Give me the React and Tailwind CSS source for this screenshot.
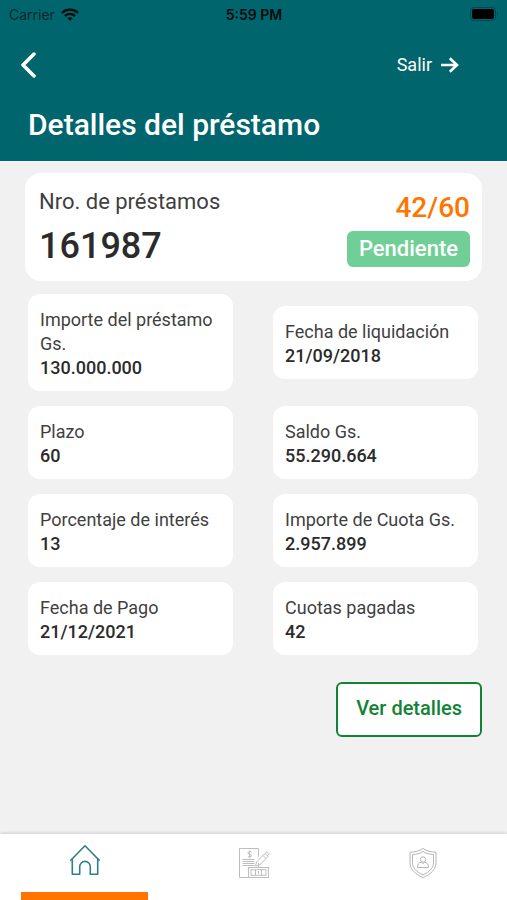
const details = [
  { label: "Importe del préstamo Gs.", value: "130.000.000" },
  { label: "Fecha de liquidación", value: "21/09/2018" },
  { label: "Plazo", value: "60" },
  { label: "Saldo Gs.", value: "55.290.664" },
  { label: "Porcentaje de interés", value: "13" },
  { label: "Importe de Cuota Gs.", value: "2.957.899" },
  { label: "Fecha de Pago", value: "21/12/2021" },
  { label: "Cuotas pagadas", value: "42" },
];

function StatusBar() {
  return (
    <div className="grid h-7 grid-cols-3 items-center pr-2 pl-[9px] font-['Inter','Liberation_Sans',sans-serif] text-[14px] text-[#06282b]">
      <div className="flex items-center gap-[6px]">
        <span>Carrier</span>
        <svg viewBox="0 0 18 13" className="h-[13px] w-[18px]" fill="none" stroke="#000c0e" strokeWidth="2.4">
          <path d="M1 4.8C5.5.6 12.5.6 17 4.8" />
          <path d="M4 8c3-2.7 7-2.7 10 0" />
          <path d="M6.400 10.200c1.600-1.300 3.600-1.300 5.200 0L9 12.800z" fill="#000c0e" stroke="none" />
        </svg>
      </div>
      <span className="text-center font-semibold text-[#000c0e]">5:59 PM</span>
      <svg viewBox="0 0 29 14" className="h-[14px] w-[29px] justify-self-end" fill="none">
        <rect x="0.5" y="0.5" width="25" height="13" rx="3.5" stroke="#04494f" />
        <rect x="2" y="2" width="22" height="10" rx="2" fill="#000" />
        <path d="M27 5c1.5.5 1.5 3.5 0 4z" fill="#04494f" />
      </svg>
    </div>
  );
}

function DetailCard({ label, value }) {
  return (
    <div className="rounded-xl bg-white px-3 pt-[14px] pb-[11px] text-[18px] leading-6">
      <dt className="text-[#3f3f3f]">{label}</dt>
      <dd className="font-medium text-[#2b2b2b]">{value}</dd>
    </div>
  );
}

function HomeIcon() {
  return (
    <svg viewBox="0 0 32 32" className="size-8" fill="none" stroke="#2f7f84" strokeWidth="1.6" strokeLinejoin="round" strokeLinecap="round">
      <path d="M1.800 16.300 16 1.800l14.200 14.500" />
      <path d="M3.300 15v15.200h7.400v-7.500a5.300 5.300 0 0 1 10.600 0v7.500h7.400V15" />
    </svg>
  );
}

function LoanIcon() {
  return (
    <svg viewBox="0 0 32 32" className="size-8" fill="none" stroke="#bdbdbd" strokeWidth="1">
      <path d="M10.500 30.500H1.500V1.500h19v8M20.500 16v4" />
      <path d="M13.500 5.200c-.8-1-3.500-1-3.500.7 0 2 3.500 1 3.500 2.800 0 1.500-2.700 1.700-3.700.6M11.700 3.500v7.500" />
      <path d="M4.500 12.500h12M4.500 14.500h12M4.500 16.500h12M4.500 18.500h12" />
      <path d="m17.500 19 1-4 8.500-8.500 3 3-8.500 8.500zM25 8.500l3 3M27 6.500l2-1.800 2 2-1.500 2" />
      <rect x="10.500" y="20.500" width="20" height="10" />
      <rect x="13" y="22.700" width="15" height="5.600" />
      <path d="M17.500 22.700v5.600M23.500 22.700v5.600M20.500 24v3" />
    </svg>
  );
}

function ShieldIcon() {
  return (
    <svg viewBox="0 0 32 32" className="size-8" fill="none" stroke="#b5b5b5" strokeWidth="1">
      <path d="M16 1.500c4 2.500 8 3.700 13 3.700v10.300c0 7-5.500 12-13 15-7.500-3-13-8-13-15V5.200c5 0 9-1.200 13-3.700z" />
      <path d="M16 4.500c3.200 1.900 6.500 2.900 10.500 3.100v8c0 5.500-4.500 9.700-10.500 12.200C10 25.300 5.500 21.100 5.500 15.600v-8c4-.2 7.300-1.200 10.500-3.100z" />
      <circle cx="16" cy="12.500" r="2.700" />
      <path d="M14.500 15.200c-2.500.5-4 1.800-4 5.300h11c0-3.500-1.500-4.800-4-5.300l-1.500 1.500z" />
    </svg>
  );
}

export default function App() {
  return (
    <div className="flex min-h-screen flex-col bg-[#f1f1f1] font-['Roboto',sans-serif]">
      <header className="bg-[#00656c] pb-4 text-white">
        <StatusBar />
        <div className="flex h-[73px] items-center justify-between pr-12 pl-5">
          <button type="button" aria-label="Volver" className="block">
            <svg viewBox="0 0 17 26" className="h-[26px] w-[17px]" fill="none" stroke="currentColor" strokeWidth="3.5" strokeLinecap="round" strokeLinejoin="round">
              <path d="M14 2 3 13l11 11" />
            </svg>
          </button>
          <button type="button" className="flex items-center gap-[9px] text-[18px] leading-6">
            Salir
            <svg viewBox="0 0 18 16" className="h-4 w-[18px]" fill="none" stroke="currentColor" strokeWidth="2.6">
              <path d="M0 8h16M8.800 1.200 16 8l-7.200 6.800" />
            </svg>
          </button>
        </div>
        <h1 className="px-7 pt-1 text-[30px] leading-10 font-medium">Detalles del préstamo</h1>
      </header>

      <main className="flex-1 px-[25px] pt-3">
        <section className="flex items-start justify-between rounded-2xl bg-white pt-[13px] pr-3 pb-[11px] pl-[14px]">
          <div className="text-[#2b2b2b]">
            <p className="text-[22px] leading-8 text-[#3f3f3f]">Nro. de préstamos</p>
            <p className="pt-2 pb-1 text-[36px] leading-10 font-medium">161987</p>
          </div>
          <div className="flex flex-col items-end pt-1">
            <p className="text-[28px] leading-9 font-medium text-[#ff7500]">42/60</p>
            <span className="mt-[5px] rounded-md bg-[#6fcf97] px-3 text-[22px] leading-9 font-medium text-white">Pendiente</span>
          </div>
        </section>

        <dl className="mt-[13px] grid grid-cols-2 items-center gap-x-10 gap-y-[15px] pr-1 pl-[3px]">
          {details.map((item) => (
            <DetailCard key={item.label} label={item.label} value={item.value} />
          ))}
        </dl>

        <div className="mt-[27px] flex justify-end">
          <button type="button" className="rounded-md border-2 border-[#128334] bg-white px-[18px] pt-[11px] pb-[13px] text-[20px] leading-[27px] font-medium text-[#128334]">
            Ver detalles
          </button>
        </div>
      </main>

      <nav className="grid h-[66px] grid-cols-3 bg-white shadow-[0_-1px_3px_rgba(0,0,0,0.15)]">
        <a href="#inicio" aria-label="Inicio" aria-current="page" className="flex flex-col items-center justify-between pt-[10px]">
          <HomeIcon />
          <span className="h-2 w-3/4 bg-[#ff7500]" />
        </a>
        <a href="#prestamos" aria-label="Préstamos" className="flex justify-center pt-[13px]">
          <LoanIcon />
        </a>
        <a href="#seguridad" aria-label="Seguridad" className="flex justify-center pt-[13px]">
          <ShieldIcon />
        </a>
      </nav>
    </div>
  );
}
